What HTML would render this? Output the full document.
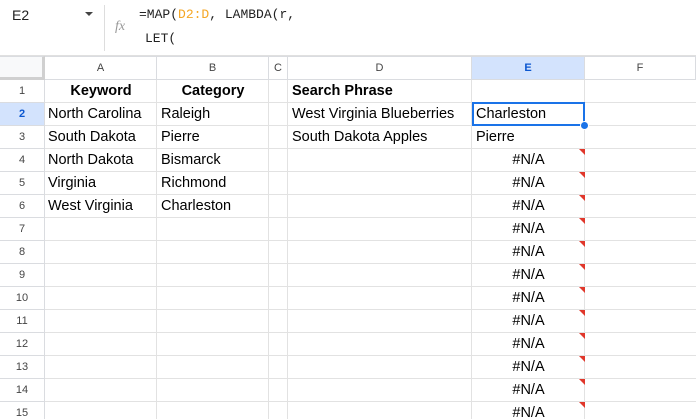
<!DOCTYPE html>
<html><head><style>
*{margin:0;padding:0;box-sizing:border-box}
html,body{width:696px;height:419px;overflow:hidden}
body{background:#fff;font-family:"Liberation Sans",Arial,sans-serif;position:relative}
.a{position:absolute}
.gh{position:absolute;top:56px;height:24px;background:#fff;border-right:1px solid #dadce0;border-bottom:1px solid #dadce0;border-top:1px solid #dadce0;font-size:11px;color:#444;text-align:center;line-height:22px}
.rh{position:absolute;left:0;width:45px;height:23px;border-right:1px solid #dadce0;border-bottom:1px solid #dadce0;font-size:11px;color:#444;text-align:center;line-height:22px}
.vl{position:absolute;top:80px;bottom:0;width:1px;background:#e2e2e2}
.hl{position:absolute;left:45px;right:0;height:1px;background:#e2e2e2}
.t{position:absolute;font-size:14.5px;color:#000;line-height:23px;white-space:nowrap}
.b{font-weight:bold;text-align:center}
.na{position:absolute;left:472px;width:113px;text-align:center;font-size:14.5px;line-height:23px}
.tri{position:absolute;left:579px;width:0;height:0;border-top:6px solid #e0372b;border-left:6px solid transparent}
</style></head><body>
<div class="a" style="left:12px;top:7px;font-size:14px;color:#222">E2</div>
<div class="a" style="left:85px;top:12px;width:0;height:0;border-left:4px solid transparent;border-right:4px solid transparent;border-top:4px solid #444"></div>
<div class="a" style="left:104px;top:5px;width:1px;height:46px;background:#ddd"></div>
<div class="a" style="left:115px;top:19px;font-size:14px;font-style:italic;color:#999;font-family:'Liberation Serif',serif">fx</div>
<div class="a" style="left:139px;top:7px;font-family:'Liberation Mono',monospace;font-size:13px;color:#222">=MAP(<span style="color:#f5a623">D2:D</span>, LAMBDA(r,</div>
<div class="a" style="left:145px;top:31px;font-family:'Liberation Mono',monospace;font-size:13px;color:#222">LET(</div>
<div class="a" style="left:0;top:55px;width:696px;height:1px;background:#e0e0e0"></div>
<div class="gh" style="left:0;width:45px;background:#f8f9fa;border-right:3px solid #d0d0d0;border-bottom:3px solid #d0d0d0"></div>
<div class="gh" style="left:45px;width:112px">A</div>
<div class="gh" style="left:157px;width:112px">B</div>
<div class="gh" style="left:269px;width:19px">C</div>
<div class="gh" style="left:288px;width:184px">D</div>
<div class="gh" style="left:472px;width:113px;background:#d3e3fd;font-weight:bold;color:#0b57d0">E</div>
<div class="gh" style="left:585px;width:111px">F</div>
<div class="vl" style="left:156px"></div><div class="vl" style="left:268px"></div><div class="vl" style="left:287px"></div><div class="vl" style="left:471px"></div><div class="vl" style="left:584px"></div>
<div class="rh" style="top:80px">1</div><div class="hl" style="top:102px"></div>
<div class="rh" style="top:103px;background:#d3e3fd;font-weight:bold;color:#0b57d0">2</div><div class="hl" style="top:125px"></div>
<div class="rh" style="top:126px">3</div><div class="hl" style="top:148px"></div>
<div class="rh" style="top:149px">4</div><div class="hl" style="top:171px"></div>
<div class="rh" style="top:172px">5</div><div class="hl" style="top:194px"></div>
<div class="rh" style="top:195px">6</div><div class="hl" style="top:217px"></div>
<div class="rh" style="top:218px">7</div><div class="hl" style="top:240px"></div>
<div class="rh" style="top:241px">8</div><div class="hl" style="top:263px"></div>
<div class="rh" style="top:264px">9</div><div class="hl" style="top:286px"></div>
<div class="rh" style="top:287px">10</div><div class="hl" style="top:309px"></div>
<div class="rh" style="top:310px">11</div><div class="hl" style="top:332px"></div>
<div class="rh" style="top:333px">12</div><div class="hl" style="top:355px"></div>
<div class="rh" style="top:356px">13</div><div class="hl" style="top:378px"></div>
<div class="rh" style="top:379px">14</div><div class="hl" style="top:401px"></div>
<div class="rh" style="top:402px">15</div>
<div class="t b" style="left:45px;width:112px;top:80px">Keyword</div>
<div class="t b" style="left:157px;width:112px;top:80px">Category</div>
<div class="t" style="left:292px;top:80px;font-weight:bold">Search Phrase</div>
<div class="t" style="left:48px;top:103px">North Carolina</div><div class="t" style="left:161px;top:103px">Raleigh</div>
<div class="t" style="left:48px;top:126px">South Dakota</div><div class="t" style="left:161px;top:126px">Pierre</div>
<div class="t" style="left:48px;top:149px">North Dakota</div><div class="t" style="left:161px;top:149px">Bismarck</div>
<div class="t" style="left:48px;top:172px">Virginia</div><div class="t" style="left:161px;top:172px">Richmond</div>
<div class="t" style="left:48px;top:195px">West Virginia</div><div class="t" style="left:161px;top:195px">Charleston</div>
<div class="t" style="left:292px;top:103px">West Virginia Blueberries</div>
<div class="t" style="left:292px;top:126px">South Dakota Apples</div>
<div class="t" style="left:476px;top:103px">Charleston</div>
<div class="t" style="left:476px;top:126px">Pierre</div>
<div class="na" style="top:149px">#N/A</div><div class="tri" style="top:149px"></div>
<div class="na" style="top:172px">#N/A</div><div class="tri" style="top:172px"></div>
<div class="na" style="top:195px">#N/A</div><div class="tri" style="top:195px"></div>
<div class="na" style="top:218px">#N/A</div><div class="tri" style="top:218px"></div>
<div class="na" style="top:241px">#N/A</div><div class="tri" style="top:241px"></div>
<div class="na" style="top:264px">#N/A</div><div class="tri" style="top:264px"></div>
<div class="na" style="top:287px">#N/A</div><div class="tri" style="top:287px"></div>
<div class="na" style="top:310px">#N/A</div><div class="tri" style="top:310px"></div>
<div class="na" style="top:333px">#N/A</div><div class="tri" style="top:333px"></div>
<div class="na" style="top:356px">#N/A</div><div class="tri" style="top:356px"></div>
<div class="na" style="top:379px">#N/A</div><div class="tri" style="top:379px"></div>
<div class="na" style="top:402px">#N/A</div><div class="tri" style="top:402px"></div>
<div class="a" style="left:472px;top:102px;width:113px;height:24px;border:2px solid #1a73e8"></div>
<div class="a" style="left:580px;top:121px;width:9px;height:9px;border-radius:50%;background:#1a73e8;border:1px solid #fff"></div>
</body></html>
